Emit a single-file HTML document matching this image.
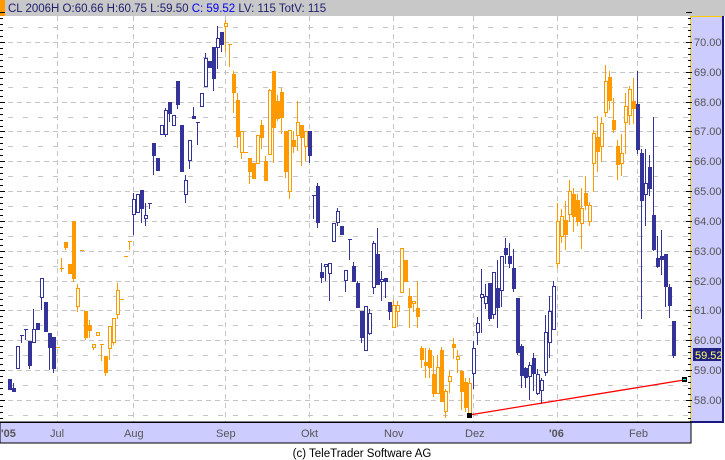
<!DOCTYPE html>
<html><head><meta charset="utf-8"><style>
html,body{margin:0;padding:0;background:#fff;width:725px;height:460px;overflow:hidden}
svg{display:block}
text{font-family:"Liberation Sans",sans-serif}
</style></head><body>
<svg id="s" width="725" height="460" xmlns="http://www.w3.org/2000/svg" shape-rendering="crispEdges">
<rect x="0" y="0" width="725" height="460" fill="#fff"/>
<rect x="0" y="0" width="725" height="16" fill="#c8c8c8"/>
<rect x="0" y="0" width="5" height="16" fill="#ff9900"/>
<text x="8" y="12" font-size="11.5" fill="#202070">CL 2006H O:60.66 H:60.75 L:59.50 <tspan fill="#0000ee">C: 59.52</tspan> LV: 115 TotV: 115</text>
<g id="grid"></g>
<g id="c"></g>
<line x1="469" y1="415" x2="684" y2="380" stroke="#ff0000" stroke-width="1.3" shape-rendering="auto"/>
<rect x="467" y="413" width="5" height="5" fill="#000"/>
<rect x="682" y="377" width="5" height="5" fill="#000"/><rect x="683" y="379" width="3" height="1" fill="#00ffff"/>
<rect x="691" y="16" width="31" height="406" fill="#ccccff"/>
<rect x="691" y="16" width="31" height="1" fill="#ffcc00"/>
<rect x="690" y="16" width="1" height="406" fill="#ffcc00"/>
<rect x="722" y="16" width="2" height="407" fill="#1a1a80"/>
<rect x="690" y="421" width="34" height="2" fill="#1a1a80"/>
<g id="rt"></g>
<rect x="693" y="348" width="28" height="13" fill="#202080"/>
<text x="695" y="359" font-size="11" fill="#ffff66">59.52</text>
<rect x="0" y="422" width="691" height="21" fill="#ccccff" stroke="#000" stroke-width="1"/>
<line x1="0" y1="422.5" x2="691" y2="422.5" stroke="#000"/>
<g font-size="11" fill="#555">
<text x="1" y="437" font-weight="bold">'05</text>
<text x="50" y="437">Jul</text>
<text x="124" y="437">Aug</text>
<text x="216" y="437">Sep</text>
<text x="301" y="437">Okt</text>
<text x="384" y="437">Nov</text>
<text x="465" y="437">Dez</text>
<text x="549" y="437" font-weight="bold">'06</text>
<text x="629" y="437">Feb</text>
</g>
<text x="362" y="457" font-size="11.5" fill="#000" text-anchor="middle">(c) TeleTrader Software AG</text>
</svg>
<script>
var NS="http://www.w3.org/2000/svg";
function el(p,t,a){var e=document.createElementNS(NS,t);for(var k in a)e.setAttribute(k,a[k]);p.appendChild(e);return e;}
var g=document.getElementById('grid'),c=document.getElementById('c'),rt=document.getElementById('rt');
function Y(p){return 42+(70-p)*29.83;}
for(var p=57.5;p<=70.5;p+=0.5){var y=Math.round(Y(p))+0.5;var integer=Math.abs(p-Math.round(p))<0.01;
el(g,'line',{x1:8,y1:y,x2:690,y2:y,stroke:'#c4c4c4','stroke-dasharray':integer?'5,4':'5,10'});}
[57,133,225,309,393,473,557,637].forEach(function(x){el(g,'line',{x1:x+0.5,y1:16,x2:x+0.5,y2:422,stroke:'#c4c4c4','stroke-dasharray':'5,4'});});
for(var p=57.4;p<=71.2;p+=0.2){var y=Math.round(Y(p));var maj=Math.abs(p-Math.round(p))<0.01;
el(g,'rect',{x:0,y:y,width:maj?5:3,height:1,fill:'#000'});
el(rt,'rect',{x:maj?686:688,y:y,width:maj?6:3,height:1,fill:'#000'});}
for(var v=58;v<=70;v++){if(v==59)continue;el(rt,'text',{x:694,y:Math.round(Y(v))+4,'font-size':'11',fill:'#555'}).textContent=v+'.00';}
el(rt,'text',{x:694,y:Math.round(Y(59))+4,'font-size':'11',fill:'#555'}).textContent='59.00';
var B='#333399',O='#ff9900';
// x, wickTop, bodyTop, bodyBottom, wickBottom, color, type
var D=[
[9,379,379,389,389,B,'f'],[13,383,388,391,391,B,'f'],[17,346,346,368,368,B,'h'],[21,335,335,342,342,B,'t'],[25,329,329,339,339,B,'t'],
[29,341,341,365,368,B,'f'],[33,309,329,342,342,B,'h'],[37,323,323,329,329,B,'f'],[41,278,278,297,309,B,'h'],[45,302,302,331,331,B,'f'],
[49,333,333,347,369,B,'f'],[53,337,337,368,372,B,'f'],[57,347,347,347,347,O,'d'],[61,258,268,268,271,O,'d'],[65,242,242,247,249,O,'f'],
[69,264,264,273,273,O,'f'],[73,221,221,278,281,O,'f'],[77,284,288,306,311,O,'h'],[81,250,250,250,250,O,'d'],[85,311,311,337,339,O,'f'],
[89,320,325,330,337,O,'f'],[93,344,344,347,349,O,'h'],[97,332,332,335,335,O,'h'],[101,344,344,360,360,O,'t'],[105,356,356,372,375,O,'f'],
[109,326,326,348,359,O,'h'],[113,318,318,342,344,O,'h'],[117,283,290,314,318,O,'h'],[121,299,299,299,299,O,'d'],[125,256,256,256,256,O,'d'],
[129,241,241,249,249,O,'t'],[133,193,199,214,234,B,'h'],[137,194,194,212,212,B,'h'],[141,190,190,208,222,B,'f'],[145,203,215,218,225,B,'h'],
[149,203,203,208,208,B,'t'],[153,143,143,155,174,B,'f'],[157,158,158,170,170,B,'f'],[161,125,125,134,134,B,'h'],[165,108,110,134,136,B,'h'],
[169,102,102,113,121,B,'f'],[173,115,115,125,125,B,'h'],[177,81,81,104,108,B,'f'],[181,125,125,171,171,B,'f'],[185,175,180,194,202,B,'h'],
[189,140,140,160,168,B,'h'],[193,107,116,118,118,B,'f'],[197,122,122,144,144,B,'t'],[201,93,93,106,106,B,'h'],[205,53,58,86,86,B,'h'],
[209,61,61,67,67,B,'f'],[213,47,47,78,90,B,'f'],[217,26,38,47,68,B,'h'],[221,32,32,44,51,B,'f'],[225,20,23,26,51,O,'h'],
[229,44,44,66,66,O,'t'],[233,71,74,92,112,O,'f'],[237,93,100,136,147,O,'f'],[241,131,131,152,158,O,'h'],[245,152,152,152,152,O,'d'],
[249,158,158,171,183,O,'f'],[253,163,163,178,178,O,'f'],[257,135,135,163,163,O,'h'],[261,120,125,137,148,O,'f'],[265,156,161,180,180,O,'f'],
[269,89,90,154,154,O,'h'],[273,71,71,127,162,O,'f'],[277,95,101,118,120,O,'f'],[281,88,92,117,133,O,'f'],[285,131,131,171,177,O,'f'],
[289,130,130,191,198,O,'h'],[293,131,140,146,152,O,'f'],[297,101,122,135,150,O,'h'],[301,125,125,137,165,O,'f'],[305,131,131,146,160,O,'h'],
[309,131,131,155,162,B,'f'],[313,195,195,218,218,B,'t'],[317,183,186,222,227,B,'f'],[321,263,272,277,282,B,'f'],[325,264,264,266,280,B,'h'],
[329,263,263,273,300,B,'h'],[333,223,223,241,241,B,'h'],[337,208,211,222,225,B,'h'],[341,226,226,234,234,B,'f'],[345,270,270,280,291,B,'h'],
[349,239,239,259,259,B,'t'],[353,262,266,281,281,B,'f'],[357,281,283,307,307,B,'f'],[361,311,311,337,342,B,'f'],[365,306,306,350,350,B,'h'],
[369,309,313,333,334,B,'h'],[373,241,243,287,293,B,'h'],[377,228,254,284,284,B,'f'],[381,271,279,281,300,B,'h'],[385,278,278,281,297,B,'f'],
[389,302,302,311,319,B,'f'],[393,300,305,327,327,O,'h'],[397,301,305,311,326,O,'h'],[401,248,248,292,292,O,'h'],[405,260,260,281,281,O,'f'],
[409,288,296,307,327,O,'f'],[413,301,301,303,311,O,'h'],[417,281,308,316,327,O,'f'],[421,346,348,359,367,O,'f'],[425,348,362,365,377,O,'f'],
[429,348,350,367,377,O,'f'],[433,356,374,393,396,O,'f'],[437,355,367,393,393,O,'h'],[441,347,350,401,401,O,'f'],[445,389,391,411,417,O,'h'],
[449,370,376,381,392,O,'h'],[453,338,344,347,358,O,'f'],[457,350,356,359,372,O,'h'],[461,370,371,391,409,O,'f'],[465,378,382,407,411,O,'f'],
[469,378,383,413,413,O,'h'],[473,341,348,373,388,B,'h'],[477,317,323,332,344,B,'h'],[481,269,294,297,332,B,'h'],[485,284,296,303,308,B,'h'],
[489,283,283,318,320,B,'f'],[493,272,272,314,318,B,'h'],[497,260,288,307,327,B,'f'],[501,256,256,290,306,B,'h'],[505,238,248,254,263,B,'f'],
[509,243,256,263,267,B,'f'],[513,249,268,288,291,B,'f'],[517,298,298,352,354,B,'f'],[521,344,346,375,387,B,'f'],[525,367,368,377,387,B,'f'],
[529,362,365,376,399,B,'h'],[533,353,358,373,390,B,'f'],[537,369,374,393,394,B,'h'],[541,378,380,390,403,B,'h'],[545,315,332,372,375,B,'h'],
[549,296,311,342,357,B,'h'],[553,281,286,329,329,B,'h'],[557,203,221,263,267,O,'h'],[561,209,216,236,242,O,'h'],[565,201,220,234,249,O,'f'],
[569,180,191,214,221,O,'h'],[573,188,194,216,231,O,'f'],[577,194,200,221,225,O,'f'],[581,188,208,223,248,O,'h'],[585,176,193,205,209,O,'f'],
[589,202,205,221,225,O,'h'],[593,130,133,163,191,O,'h'],[597,116,137,151,171,O,'f'],[601,117,123,146,161,O,'h'],[605,65,81,112,116,O,'h'],
[609,71,77,100,109,O,'f'],[613,98,120,129,132,O,'f'],[617,140,146,164,179,O,'f'],[621,134,153,163,175,O,'h'],[625,93,106,122,153,O,'h'],
[629,86,89,115,124,O,'h'],[633,78,101,108,123,O,'f'],[637,71,104,149,153,B,'f'],[641,149,153,200,318,B,'f'],[645,149,183,194,225,B,'h'],
[649,155,167,188,195,B,'f'],[653,117,215,249,250,B,'f'],[657,236,258,266,267,B,'f'],[661,230,256,259,274,B,'f'],[665,254,254,286,306,B,'f'],
[669,284,287,305,317,B,'f'],[673,321,321,355,357,B,'f']
];
D.forEach(function(d){var x=d[0],wt=d[1],bt=d[2],bb=d[3],wb=d[4],col=d[5],t=d[6];
if(t=='d'){ if(wt<bt||wb>bb) el(c,'rect',{x:x,y:wt,width:1,height:wb-wt+1,fill:col}); el(c,'rect',{x:x-1,y:bt,width:4,height:1,fill:col});return;}
if(t=='t'){el(c,'rect',{x:x,y:wt,width:1,height:wb-wt+1,fill:col});el(c,'rect',{x:x-1,y:wt,width:4,height:1,fill:col});return;}
el(c,'rect',{x:x,y:wt,width:1,height:wb-wt+1,fill:col});
var h=Math.max(bb-bt,2);
if(t=='f') el(c,'rect',{x:x-1,y:bt,width:4,height:h+1,fill:col});
else el(c,'rect',{x:x-0.5,y:bt+0.5,width:3,height:h,fill:'#fff',stroke:col,'stroke-width':1});
});
</script>
</body></html>
